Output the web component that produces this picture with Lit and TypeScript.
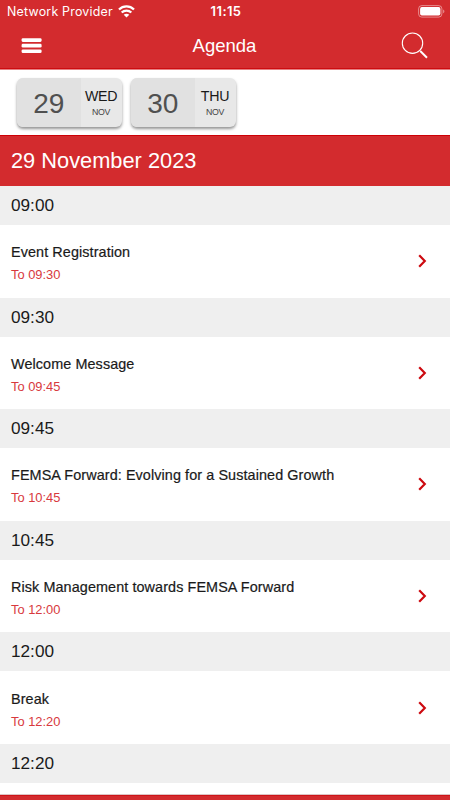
import { LitElement, html, css } from "lit";
import { customElement } from "lit/decorators.js";

interface Session {
  start: string;
  title?: string;
  end?: string;
}

const sessions: Session[] = [
  { start: "09:00", title: "Event Registration", end: "09:30" },
  { start: "09:30", title: "Welcome Message", end: "09:45" },
  { start: "09:45", title: "FEMSA Forward: Evolving for a Sustained Growth", end: "10:45" },
  { start: "10:45", title: "Risk Management towards FEMSA Forward", end: "12:00" },
  { start: "12:00", title: "Break", end: "12:20" },
  { start: "12:20" },
];

const days = [
  { date: "29", day: "WED", month: "NOV" },
  { date: "30", day: "THU", month: "NOV" },
];

@customElement("app-root")
export class AppRoot extends LitElement {
  static styles = css`
    :host {
      display: flex;
      flex-direction: column;
      width: 450px;
      height: 800px;
      overflow: hidden;
      background: #fff;
      color: #1a1a1a;
      font-family: "Liberation Sans", Arial, sans-serif;
    }
    svg { display: block; }
    header {
      flex: none;
      box-sizing: border-box;
      height: 70px;
      background: #d32b2e;
      color: #fff;
      border-bottom: 1px solid #e58082;
      box-shadow: inset 0 -1px #cd0c10;
    }
    .status, .nav {
      display: grid;
      grid-template-columns: 1fr auto 1fr;
      align-items: center;
    }
    .status {
      height: 23px;
      padding: 0 5px 0 7px;
      font: 400 12.4px/23px Inter, sans-serif;
      letter-spacing: 0.23px;
    }
    .carrier { display: flex; align-items: center; gap: 5px; }
    .clock { font-size: 13px; font-weight: 600; letter-spacing: 0.4px; }
    .end { justify-self: end; }
    .nav { height: 46px; padding: 0 22px 0 21px; }
    .heading { font-size: 18.5px; line-height: 46px; }
    .days {
      flex: none;
      box-sizing: border-box;
      height: 65px;
      display: flex;
      gap: 9.5px;
      padding: 7.5px 17px;
    }
    .day {
      display: flex;
      width: 104.5px;
      height: 49.5px;
      border-radius: 6px;
      overflow: hidden;
      background: #e8e8e8;
      box-shadow: 0 2px 3px rgba(0, 0, 0, 0.42);
    }
    .date {
      width: 63.5px;
      background: #e1e1e1;
      color: #505050;
      font-size: 28px;
      line-height: 51px;
      text-align: center;
    }
    .label {
      flex: 1;
      display: flex;
      flex-direction: column;
      align-items: center;
      padding-top: 9px;
    }
    .weekday { font-size: 14.2px; line-height: 18px; letter-spacing: -0.3px; }
    .month { font-size: 8.8px; line-height: 15px; color: #444; letter-spacing: -0.35px; }
    .banner {
      flex: none;
      box-sizing: border-box;
      height: 51px;
      padding-left: 11px;
      border-top: 1px solid #cd0006;
      background: #d32b2e;
      color: #fff;
      font-size: 21.8px;
      line-height: 49px;
    }
    .list { flex: 1; overflow: hidden; }
    .time {
      height: 39px;
      padding-left: 11px;
      background: #efefef;
      font-size: 17.2px;
      line-height: 39px;
    }
    .row {
      box-sizing: border-box;
      height: 72.6px;
      padding: 0 22px 0 11px;
      display: flex;
      align-items: center;
      justify-content: space-between;
    }
    .title {
      font-size: 14.4px;
      line-height: 22px;
      letter-spacing: 0.09px;
      -webkit-text-stroke: 0.2px #1a1a1a;
      margin-top: 6px;
    }
    .until { font-size: 12.9px; line-height: 24px; color: #d8393d; }
    .footer {
      flex: none;
      height: 5px;
      background: #d32b2e;
      box-shadow: inset 0 1px #cd1418, 0 -1px #ddc4c4;
      z-index: 1;
    }
  `;

  render() {
    return html`
      <header>
        <div class="status">
          <div class="carrier">
            <span>Network Provider</span>
            <svg width="17" height="13" viewBox="0 0 17 13" fill="none" stroke="#fff" stroke-width="2.3">
              <path d="M1 4.5C5.2.4 11.8.4 16 4.5M3.7 7.5c2.7-2.6 6.9-2.6 9.6 0" />
              <path d="M8.5 12.5 5.7 9.8c1.6-1.4 4-1.4 5.6 0z" fill="#fff" stroke="none" />
            </svg>
          </div>
          <span class="clock">11:15</span>
          <svg class="end" width="27" height="13" viewBox="0 0 27 13">
            <rect x=".6" y=".6" width="23.3" height="11.5" rx="3.2" fill="none" stroke="#fff" stroke-opacity=".45" />
            <rect x="2.1" y="2.1" width="20.3" height="8.5" rx="1.8" fill="#fff" />
            <path d="M25.2 4.5c1.6.5 1.6 3.3 0 3.8z" fill="#fff" opacity=".5" />
          </svg>
        </div>
        <div class="nav">
          <svg width="21" height="16" viewBox="0 0 21 16" fill="#fff">
            <rect x=".6" y=".2" width="20" height="3.7" rx="1.3" />
            <rect x=".6" y="5.8" width="20" height="3.7" rx="1.3" />
            <rect x=".6" y="11.4" width="20" height="3.7" rx="1.3" />
          </svg>
          <span class="heading">Agenda</span>
          <svg class="end" width="27" height="28" viewBox="0 0 27 28" fill="none" stroke="#fff">
            <circle cx="11.5" cy="11.2" r="10.2" stroke-width="1.1" />
            <path d="m18.5 18.4 1.6 1.5" stroke-width="1.1" />
            <path d="m19.5 19.2 6.5 6.5" stroke-width="2" />
          </svg>
        </div>
      </header>
      <div class="days">
        ${days.map(
          (d) => html`<div class="day">
            <div class="date">${d.date}</div>
            <div class="label"><span class="weekday">${d.day}</span><span class="month">${d.month}</span></div>
          </div>`
        )}
      </div>
      <div class="banner">29 November 2023</div>
      <div class="list">
        ${sessions.map(
          (s) => html`<div class="time">${s.start}</div>
            ${s.title
              ? html`<div class="row">
                  <div>
                    <div class="title">${s.title}</div>
                    <div class="until">To ${s.end}</div>
                  </div>
                  <svg width="11" height="14" viewBox="0 0 11 14" fill="none" stroke="#cd0a10" stroke-width="2.2">
                    <path d="m2.2 1.2 5.6 5.8-5.6 5.8" />
                  </svg>
                </div>`
              : null}`
        )}
      </div>
      <div class="footer"></div>
    `;
  }
}
